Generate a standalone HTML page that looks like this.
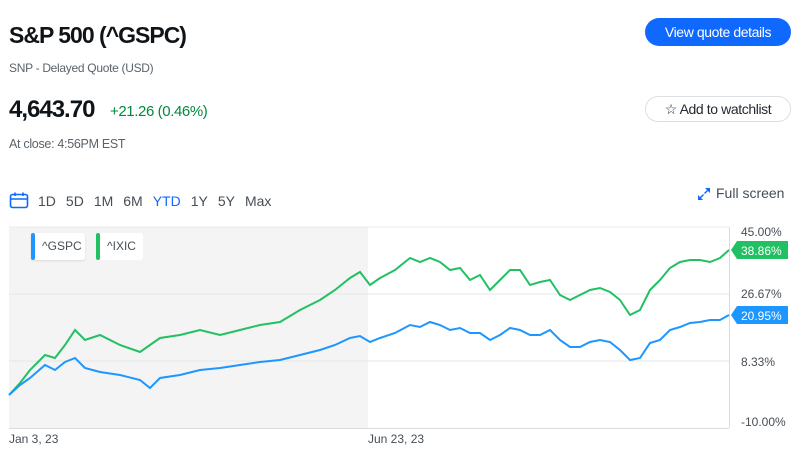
<!DOCTYPE html>
<html><head><style>
body{margin:0;width:801px;height:460px;background:#fff;font-family:"Liberation Sans",sans-serif;position:relative;overflow:hidden;color:#232a31}
.a{position:absolute;white-space:nowrap}
</style></head><body>
<div class="a" style="left:9px;top:22px;font-size:23px;font-weight:bold;letter-spacing:-1px;color:#0f1419">S&amp;P 500 (^GSPC)</div>
<div class="a" style="left:9px;top:61px;font-size:12px;color:#5b636a;letter-spacing:-0.3px">SNP - Delayed Quote (USD)</div>
<div class="a" style="left:9px;top:96px;font-size:24px;font-weight:bold;letter-spacing:-1px;color:#0f1419">4,643.70</div>
<div class="a" style="left:110px;top:103px;font-size:15px;color:#008a3e;letter-spacing:-0.4px">+21.26 (0.46%)</div>
<div class="a" style="left:9px;top:137px;font-size:12.5px;color:#5b636a;letter-spacing:-0.3px">At close: 4:56PM EST</div>
<div class="a" style="left:645px;top:18px;width:146px;height:28px;border-radius:14px;background:#0f69ff;color:#fff;font-size:14px;line-height:28px;text-align:center;letter-spacing:-0.4px">View quote details</div>
<div class="a" style="left:645px;top:96px;width:144px;height:24px;border-radius:13px;border:1.5px solid #dcdfe3;color:#232a31;font-size:14px;line-height:24px;text-align:center;letter-spacing:-0.4px">☆ Add to watchlist</div>
<svg class="a" style="left:9px;top:192px" width="20" height="17" viewBox="0 0 20 17"><rect x="1.5" y="2.5" width="17" height="13" rx="2" fill="none" stroke="#0f69ff" stroke-width="1.6"/><line x1="1.5" y1="7" x2="18.5" y2="7" stroke="#0f69ff" stroke-width="1.6"/><line x1="6" y1="0.5" x2="6" y2="4" stroke="#0f69ff" stroke-width="1.6"/><line x1="14" y1="0.5" x2="14" y2="4" stroke="#0f69ff" stroke-width="1.6"/></svg>
<div class="a" style="left:38px;top:193px;font-size:14px;color:#464e56;word-spacing:0">
<span style="margin-right:10px">1D</span><span style="margin-right:10px">5D</span><span style="margin-right:10px">1M</span><span style="margin-right:10px">6M</span><span style="margin-right:10px;color:#0f69ff">YTD</span><span style="margin-right:10px">1Y</span><span style="margin-right:10px">5Y</span><span>Max</span></div>
<svg class="a" style="left:697px;top:187px" width="14" height="14" viewBox="0 0 14 14" fill="#0f69ff"><path d="M8 1h5v5l-2-2-3 3-1-1 3-3z"/><path d="M6 13H1V8l2 2 3-3 1 1-3 3z"/></svg>
<div class="a" style="left:716px;top:185px;font-size:14px;color:#464e56">Full screen</div>
<svg class="a" style="left:0;top:0" width="801" height="460">
<rect x="9" y="227" width="359" height="202" fill="#f4f4f4"/>
<line x1="9" y1="227" x2="729" y2="227" stroke="#ebebeb"/>
<line x1="9" y1="294" x2="729" y2="294" stroke="#e6e6e6"/>
<line x1="9" y1="361" x2="729" y2="361" stroke="#e6e6e6"/>
<line x1="729.5" y1="227" x2="729.5" y2="428" stroke="#dcdcdc"/>
<line x1="9" y1="428.5" x2="729" y2="428.5" stroke="#dcdcdc"/>
<polyline fill="none" stroke="#21c063" stroke-width="2" points="9,395 20,383 30,370 45,355 55,358 65,345 75,330 85,340 100,335 120,345 140,352 150,345 160,338 180,335 200,330 220,335 240,330 260,325 280,322 300,310 320,300 335,290 350,278 360,272 370,285 380,278 395,270 410,258 420,262 430,258 440,262 450,270 460,268 470,280 480,275 490,290 500,280 510,270 520,270 530,285 540,282 550,280 560,295 570,300 580,295 590,290 600,288 610,292 620,300 630,315 640,310 650,290 660,280 670,268 680,262 690,260 700,260 710,262 720,258 729,250"/>
<polyline fill="none" stroke="#1e96ff" stroke-width="2" points="9,395 20,385 30,378 45,365 55,370 65,362 75,358 85,368 100,372 120,375 140,380 150,388 160,378 180,375 200,370 220,368 240,365 260,362 280,360 300,355 320,350 335,345 350,338 360,336 370,342 380,338 395,333 410,325 420,327 430,322 440,325 450,330 460,328 470,333 480,333 490,340 500,335 510,328 520,330 530,335 540,335 550,330 560,340 570,347 580,347 590,342 600,340 610,342 620,350 630,360 640,358 650,343 660,340 670,330 680,327 690,323 700,322 710,320 720,320 729,315"/>
<path d="M731,250 L737,241 H788 V259 H737 Z" fill="#21c063"/>
<path d="M731,315 L737,306 H788 V324 H737 Z" fill="#1e96ff"/>
<g font-size="12" font-family="Liberation Sans,sans-serif">
<text x="741" y="236" fill="#464e56">45.00%</text>
<text x="741" y="255" fill="#fff">38.86%</text>
<text x="741" y="298" fill="#464e56">26.67%</text>
<text x="741" y="320" fill="#fff">20.95%</text>
<text x="741" y="366" fill="#464e56">8.33%</text>
<text x="741" y="426" fill="#464e56">-10.00%</text>
<text x="9" y="443" fill="#464e56">Jan 3, 23</text>
<text x="368" y="443" fill="#464e56">Jun 23, 23</text>
</g>
<rect x="31" y="233" width="54" height="27" rx="3" fill="#fff" style="filter:drop-shadow(0 1px 1px rgba(0,0,0,.1))"/>
<rect x="31" y="233" width="4" height="27" rx="2" fill="#1e96ff"/>
<rect x="96" y="233" width="47" height="27" rx="3" fill="#fff"/>
<rect x="96" y="233" width="4" height="27" rx="2" fill="#21c063"/>
<text x="42" y="250" font-size="12" fill="#464e56" font-family="Liberation Sans,sans-serif">^GSPC</text>
<text x="107" y="250" font-size="12" fill="#464e56" font-family="Liberation Sans,sans-serif">^IXIC</text>
</svg>
</body></html>
